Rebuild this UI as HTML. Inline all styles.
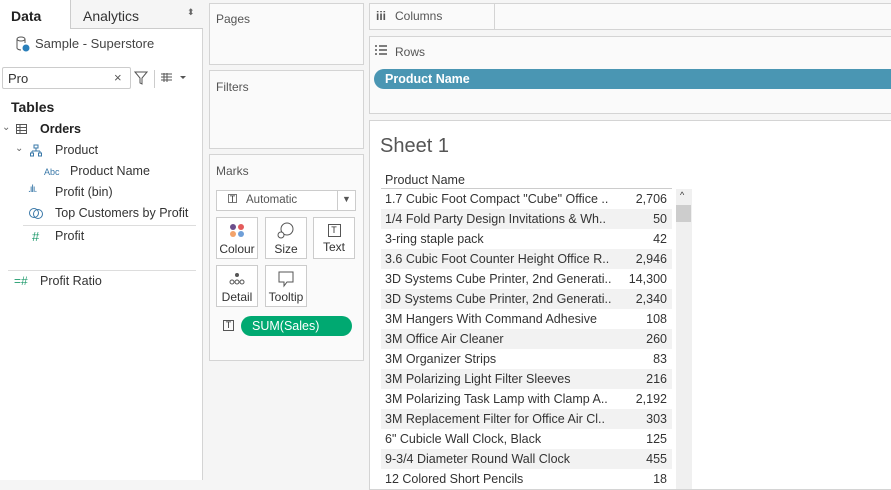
<!DOCTYPE html><html><head><style>
*{margin:0;padding:0;box-sizing:border-box}
body{width:891px;height:480px;overflow:hidden;background:#f5f5f5;font-family:"Liberation Sans",sans-serif;font-size:12px;color:#333;position:relative}
.a{position:absolute}
.card{position:absolute;background:#fafafa;border:1px solid #d4d4d4}
.t{position:absolute;white-space:nowrap}
.row{position:absolute;left:381px;width:291px;height:20px;line-height:20px;font-size:12.5px}
.row span{position:absolute;left:4px}
.row b{position:absolute;right:5px;font-weight:normal}
.btn{position:absolute;width:42px;height:42px;border:1px solid #ccc;background:#fff;font-size:12px;text-align:center}
</style></head><body>
<div class="a" style="left:0;top:0;width:203px;height:480px;background:#fff;border-right:1px solid #d4d4d4"></div>
<div class="a" style="left:70px;top:0;width:133px;height:29px;background:#f5f5f5;border-left:1px solid #ccc;border-bottom:1px solid #ccc"></div>
<div class="t" style="left:11px;top:8px;font-size:14px;font-weight:bold;color:#222">Data</div>
<div class="t" style="left:83px;top:8px;font-size:14px">Analytics</div>
<div class="t" style="left:187px;top:7px;font-size:9px;color:#666">⬍</div>
<svg class="a" style="left:15px;top:36px" width="16" height="16"><ellipse cx="6" cy="3" rx="4" ry="2" fill="none" stroke="#555"/><path d="M2 3v9c0 1 2 2 4 2M10 3v4" fill="none" stroke="#555"/><circle cx="11" cy="12" r="3.5" fill="#2a7fba"/></svg>
<div class="t" style="left:35px;top:36px;font-size:13px;color:#444">Sample - Superstore</div>
<div class="a" style="left:2px;top:67px;width:129px;height:22px;border:1px solid #ccc;border-radius:2px"></div>
<div class="t" style="left:8px;top:71px;font-size:13px">Pro</div>
<div class="t" style="left:114px;top:70px;font-size:13px;color:#555">×</div>
<svg class="a" style="left:134px;top:71px" width="14" height="14"><path d="M1 1h12L8 7v6L6 12V7z" fill="none" stroke="#555"/></svg>
<div class="a" style="left:154px;top:70px;width:1px;height:18px;background:#ccc"></div>
<svg class="a" style="left:161px;top:73px" width="30" height="10"><path d="M0 1h11M0 4h11M0 7h11M3 0v9M6 0v9" stroke="#555" fill="none"/><path d="M19 3h6l-3 3z" fill="#555"/></svg>
<div class="t" style="left:11px;top:99px;font-size:14px;font-weight:bold;color:#222">Tables</div>
<div class="t" style="left:2px;top:122px;font-size:10px;color:#666">⌄</div>
<svg class="a" style="left:16px;top:124px" width="12" height="11"><rect x=".5" y=".5" width="10" height="9" fill="none" stroke="#555"/><path d="M1 3.5h9M1 6.5h9M4 1v9" stroke="#555"/></svg>
<div class="t" style="left:40px;top:122px;font-size:12.5px;font-weight:bold;color:#222">Orders</div>
<div class="t" style="left:15px;top:143px;font-size:10px;color:#666">⌄</div>
<svg class="a" style="left:30px;top:144px" width="13" height="13"><rect x="4" y="1" width="4" height="3" fill="none" stroke="#3a78a8"/><path d="M6 4v3M2 7h8M2 7v2M10 7v2" stroke="#3a78a8" fill="none"/><rect x="0.5" y="9" width="3" height="3" fill="none" stroke="#3a78a8"/><rect x="8.5" y="9" width="3" height="3" fill="none" stroke="#3a78a8"/></svg>
<div class="t" style="left:55px;top:143px;font-size:12.5px">Product</div>
<div class="t" style="left:44px;top:167px;font-size:9px;color:#3a78a8">Abc</div>
<div class="t" style="left:70px;top:164px;font-size:12.5px">Product Name</div>
<div class="t" style="left:28px;top:184px;font-size:10px;color:#3a78a8;letter-spacing:-1px">.ılı.</div>
<div class="t" style="left:55px;top:185px;font-size:12.5px">Profit (bin)</div>
<svg class="a" style="left:29px;top:207px" width="15" height="13"><circle cx="5" cy="6" r="4.5" fill="none" stroke="#3a78a8"/><circle cx="9" cy="7" r="4.5" fill="none" stroke="#3a78a8"/></svg>
<div class="t" style="left:55px;top:206px;font-size:12.5px">Top Customers by Profit</div>
<div class="a" style="left:23px;top:225px;width:173px;height:1px;background:#ddd"></div>
<div class="t" style="left:32px;top:229px;font-size:13px;color:#1f9a6c">#</div>
<div class="t" style="left:55px;top:229px;font-size:12.5px">Profit</div>
<div class="a" style="left:8px;top:270px;width:188px;height:1px;background:#ddd"></div>
<div class="t" style="left:14px;top:274px;font-size:12px;color:#1f9a6c">=#</div>
<div class="t" style="left:40px;top:274px;font-size:12.5px">Profit Ratio</div>

<div class="card" style="left:209px;top:3px;width:155px;height:62px"></div>
<div class="t" style="left:216px;top:12px;color:#555">Pages</div>
<div class="card" style="left:209px;top:70px;width:155px;height:79px"></div>
<div class="t" style="left:216px;top:80px;color:#555">Filters</div>
<div class="card" style="left:209px;top:154px;width:155px;height:207px"></div>
<div class="t" style="left:216px;top:164px;color:#555">Marks</div>
<div class="a" style="left:216px;top:190px;width:140px;height:21px;border:1px solid #ccc;background:#fff"></div>
<div class="a" style="left:337px;top:191px;width:1px;height:19px;background:#ccc"></div>
<div class="t" style="left:342px;top:194px;font-size:9px;color:#555">▼</div>
<div class="t" style="left:228px;top:194px;font-size:9px;border:1px solid #777;width:9px;height:9px;line-height:8px;text-align:center">T</div>
<div class="t" style="left:246px;top:194px;font-size:11.5px;color:#555">Automatic</div>
<div class="btn" style="left:216px;top:217px"><svg width="20" height="20" style="margin-top:3px"><circle cx="6" cy="6" r="3" fill="#6c4f8c"/><circle cx="14" cy="6" r="3" fill="#e45b5b"/><circle cx="6" cy="13" r="3" fill="#f3a36a"/><circle cx="14" cy="13" r="3" fill="#6f9fd8"/></svg><div style="margin-top:-2px">Colour</div></div>
<div class="btn" style="left:265px;top:217px"><svg width="20" height="20" style="margin-top:3px"><circle cx="11" cy="8" r="6" fill="none" stroke="#555"/><circle cx="5" cy="14" r="3" fill="#fff" stroke="#555"/></svg><div style="margin-top:-2px">Size</div></div>
<div class="btn" style="left:313px;top:217px"><div style="margin:6px auto 0;width:13px;height:13px;border:1px solid #555;font-size:9px;line-height:11px">T</div><div style="margin-top:3px">Text</div></div>
<div class="btn" style="left:216px;top:265px"><svg width="20" height="20" style="margin-top:3px"><circle cx="10" cy="6" r="2" fill="#555"/><circle cx="5" cy="13" r="2" fill="none" stroke="#555"/><circle cx="10" cy="13" r="2" fill="none" stroke="#555"/><circle cx="15" cy="13" r="2" fill="none" stroke="#555"/></svg><div style="margin-top:-2px">Detail</div></div>
<div class="btn" style="left:265px;top:265px"><svg width="20" height="20" style="margin-top:3px"><path d="M3 3h14v10h-6l-3 4v-4H3z" fill="none" stroke="#555"/></svg><div style="margin-top:-2px">Tooltip</div></div>
<div class="t" style="left:223px;top:320px;font-size:9px;border:1px solid #555;width:11px;height:11px;line-height:9px;text-align:center">T</div>
<div class="a" style="left:241px;top:316px;width:111px;height:20px;background:#00a971;border-radius:10px;color:#fff;font-size:12.5px;line-height:20px;padding-left:11px">SUM(Sales)</div>

<div class="card" style="left:369px;top:3px;width:530px;height:27px"></div>
<div class="a" style="left:494px;top:3px;width:1px;height:27px;background:#d4d4d4"></div>
<div class="t" style="left:376px;top:9px;font-size:12px;font-weight:bold;color:#555">iii</div>
<div class="t" style="left:395px;top:9px;color:#555">Columns</div>
<div class="card" style="left:369px;top:36px;width:530px;height:78px"></div>
<svg class="a" style="left:375px;top:45px" width="12" height="10"><path d="M0 1h2M4 1h8M0 5h2M4 5h8M0 9h2M4 9h8" stroke="#555" stroke-width="1.5"/></svg>
<div class="t" style="left:395px;top:45px;color:#555">Rows</div>
<div class="a" style="left:374px;top:69px;width:520px;height:20px;background:#4a96b3;border-radius:10px 0 0 10px;color:#fff;font-size:12.5px;font-weight:bold;line-height:20px;padding-left:11px">Product Name</div>
<div class="a" style="left:369px;top:120px;width:530px;height:370px;background:#fff;border:1px solid #d4d4d4"></div>
<div class="t" style="left:380px;top:135px;font-size:20px;color:#555;font-weight:300">Sheet 1</div>
<div class="t" style="left:385px;top:173px;font-size:12.5px">Product Name</div>
<div class="a" style="left:381px;top:188px;width:291px;height:1px;background:#ccc"></div>
<div class="a" style="left:676px;top:189px;width:16px;height:300px;background:#f0f0f0"></div>
<div class="t" style="left:680px;top:190px;font-size:9px;color:#333">^</div>
<div class="a" style="left:676px;top:205px;width:15px;height:17px;background:#cdcdcd"></div>
<div class="row" style="top:189px"><span>1.7 Cubic Foot Compact "Cube" Office ..</span><b>2,706</b></div>
<div class="row" style="top:209px;background:#f2f2f2"><span>1/4 Fold Party Design Invitations &amp; Wh..</span><b>50</b></div>
<div class="row" style="top:229px"><span>3-ring staple pack</span><b>42</b></div>
<div class="row" style="top:249px;background:#f2f2f2"><span>3.6 Cubic Foot Counter Height Office R..</span><b>2,946</b></div>
<div class="row" style="top:269px"><span>3D Systems Cube Printer, 2nd Generati..</span><b>14,300</b></div>
<div class="row" style="top:289px;background:#f2f2f2"><span>3D Systems Cube Printer, 2nd Generati..</span><b>2,340</b></div>
<div class="row" style="top:309px"><span>3M Hangers With Command Adhesive</span><b>108</b></div>
<div class="row" style="top:329px;background:#f2f2f2"><span>3M Office Air Cleaner</span><b>260</b></div>
<div class="row" style="top:349px"><span>3M Organizer Strips</span><b>83</b></div>
<div class="row" style="top:369px;background:#f2f2f2"><span>3M Polarizing Light Filter Sleeves</span><b>216</b></div>
<div class="row" style="top:389px"><span>3M Polarizing Task Lamp with Clamp A..</span><b>2,192</b></div>
<div class="row" style="top:409px;background:#f2f2f2"><span>3M Replacement Filter for Office Air Cl..</span><b>303</b></div>
<div class="row" style="top:429px"><span>6" Cubicle Wall Clock, Black</span><b>125</b></div>
<div class="row" style="top:449px;background:#f2f2f2"><span>9-3/4 Diameter Round Wall Clock</span><b>455</b></div>
<div class="row" style="top:469px"><span>12 Colored Short Pencils</span><b>18</b></div>
</body></html>
